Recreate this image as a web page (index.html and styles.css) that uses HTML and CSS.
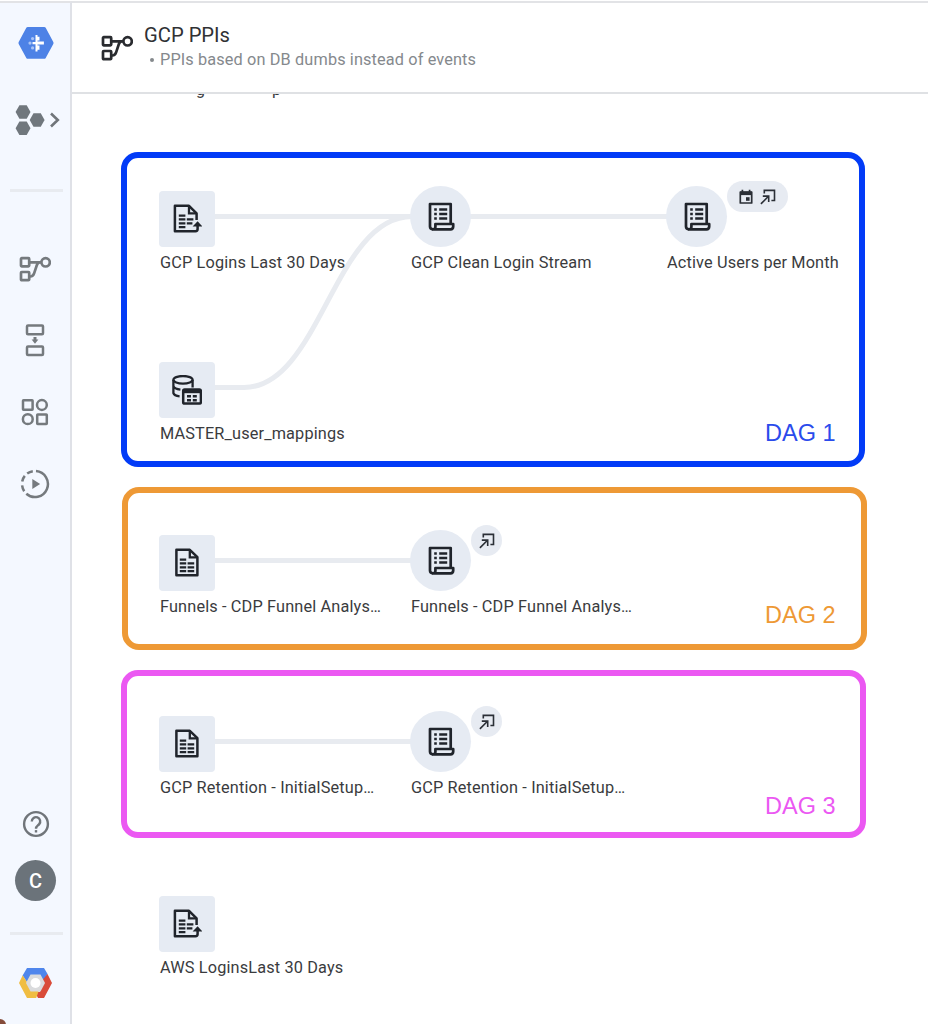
FILE: index.html
```html
<!DOCTYPE html>
<html lang="en">
<head>
<meta charset="utf-8">
<title>GCP PPIs</title>
<link rel="stylesheet" href="styles.css">
</head>
<body>
<svg class="defs" width="0" height="0" aria-hidden="true">
  <symbol id="flow" viewBox="0 0 32 26">
    <g fill="none" stroke="currentColor" stroke-width="2.7">
      <rect x="2" y="2.2" width="8.2" height="8.2" rx=".8"/>
      <rect x="2" y="16" width="8.2" height="8.2" rx=".8"/>
      <circle cx="26.6" cy="6.3" r="4.2"/>
      <path d="M10 6.3h12.4M10 20.5h1.4c2.2 0 3-1 3.8-3.4l2.6-7.8c.6-1.8 1.4-3 3-3"/>
    </g>
  </symbol>
  <symbol id="doc" viewBox="0 0 30 30">
    <path d="M4.4 2.2h13.4l7.6 7.4v18h-21z" transform="translate(0 -.4)" fill="none" stroke="currentColor" stroke-width="2.5" stroke-linejoin="round"/>
    <path d="M17.8 1.8v7.6h7.6" fill="none" stroke="currentColor" stroke-width="2.3"/>
    <path d="M7.8 11.6h6.4M7.8 15.4h6.4M7.8 19.4h6.4M7.8 23.2h6.4M15.6 15.4h6.6M15.6 19.4h6.6M15.6 23.2h6.6" stroke="currentColor" stroke-width="2.3"/>
  </symbol>
  <symbol id="docup" viewBox="0 0 30 30">
    <path d="M24.6 16V9.4L17 1.8H2.9v25.4h20.6q2.1 0 2.1-2.2v-3.400" fill="none" stroke="currentColor" stroke-width="2.5" stroke-linejoin="round"/>
    <path d="M17 1.8v7.6h7.6" fill="none" stroke="currentColor" stroke-width="2.3"/>
    <path d="M6.8 11.6h6.600M6.8 15.4h6.600M6.8 19.4h6.600M6.8 23.2h6.600M14.8 15.4h6.600M14.8 19.4h5.6" stroke="currentColor" stroke-width="2.3"/>
    <path d="M20.6 22.6l5-5.4 5 5.400z" fill="currentColor"/>
  </symbol>
  <symbol id="scroll" viewBox="0 0 28 30">
    <g fill="none" stroke="currentColor" stroke-width="2.7" stroke-linejoin="round">
      <path d="M23.7 21.6V2H3v22.600q0 2.700 3 2.700"/>
      <path d="M8.4 22h17.8v2.500q0 2.800-2.700 2.800H6q2.400 0 2.400-2.600z"/>
    </g>
    <path d="M7.2 7.500h2.600M7.200 12h2.600M7.200 16.500h2.600M12.200 7.500h8M12.200 12h8M12.200 16.500h8" stroke="currentColor" stroke-width="2.5"/>
  </symbol>
  <symbol id="dbtable" viewBox="0 0 30 30">
    <g fill="none" stroke="currentColor" stroke-width="2.300">
      <ellipse cx="11" cy="4.800" rx="9.600" ry="3.800"/>
      <path d="M1.400 5v13.200q.8 2.600 6.200 3.200M1.400 11.200q1 2.800 7 3.500M20.600 5v7.600"/>
    </g>
    <rect x="11.200" y="14.600" width="17.700" height="14" rx="1.400" fill="none" stroke="currentColor" stroke-width="2.500"/>
    <path d="M11.200 14.200h17.700v4H11.200z" fill="currentColor"/>
    <path d="M15 21.200h4M20.800 21.200h4M15 25.300h4M20.800 25.300h4" stroke="currentColor" stroke-width="2.400"/>
  </symbol>
  <symbol id="export" viewBox="0 0 16 16">
    <path d="M4.300 4.400V1.400h10.200v10.100h-3.100M.9 14.900L8.500 7.300M2.800 7.100h5.900V13" fill="none" stroke="currentColor" stroke-width="1.600"/>
  </symbol>
  <symbol id="calendar" viewBox="0 0 14 16">
    <path d="M1.300 3h11.400v11H1.300z" fill="none" stroke="currentColor" stroke-width="1.700" stroke-linejoin="round"/>
    <path d="M1.200 2.600h11.600v3.500H1.200z" fill="currentColor"/>
    <path d="M3.400.7v3M10.600.7v3" stroke="currentColor" stroke-width="1.700"/>
    <path d="M7 8.200h3.600v3.600H7z" fill="currentColor"/>
  </symbol>
</svg>

<div class="app">
  <nav class="sidebar">
    <svg class="product" width="36" height="34" viewBox="0 0 36 34">
      <path d="M9.800 1h16.400q1 0 1.500.8l7.600 14.100q.5 1 0 2l-7.600 14q-.5.9-1.500.9H9.800q-1 0-1.500-.9L.7 17.900q-.5-1 0-2L8.300 1.800q.5-.8 1.500-.8z" fill="#4d82e6"/>
      <path d="M17.500 9h2v16.400h-2zM19.500 10.700h2v3.800h-2zM19.500 19.500h2v4.200h-2zM19.500 15.600h6.400v3h-6.400zM14.500 15.900h3.500v2.400h-3.500z" fill="#fff"/>
      <g fill="#a9c4f6"><circle cx="14.600" cy="12.600" r="1.600"/><circle cx="12" cy="17.100" r="1.600"/><circle cx="14.600" cy="21.900" r="1.600"/></g>
    </svg>
    <svg class="switcher" width="46" height="32" viewBox="0 0 46 32">
      <g fill="#70777d">
        <path d="M4.400 1.200h7.300L15.500 8l-3.800 6.800H4.400L.6 8z"/>
        <path d="M18.500 9.200h7.300l3.800 6.800-3.800 6.800h-7.300L14.700 16z"/>
        <path d="M4.400 17.400h7.300l3.800 6.800-3.800 6.800H4.400L.6 24.200z"/>
      </g>
      <path d="M36 9.500l6.800 6.500-6.800 6.500" fill="none" stroke="#70757a" stroke-width="2.600"/>
    </svg>
    <hr class="rule">
    <div class="menu">
      <svg width="32" height="26"><use href="#flow"/></svg>
      <svg width="20" height="34" viewBox="0 0 20 34" fill="none" stroke="currentColor" stroke-width="2.500">
        <rect x="2" y="2.600" width="16" height="8.600" rx="1"/><rect x="2" y="23.400" width="16" height="8.600" rx="1"/>
        <path d="M10 14v3.500" stroke-width="3"/><path d="M6.600 16.600h6.800L10 20.800z" fill="currentColor" stroke="none"/>
      </svg>
      <svg width="28" height="28" viewBox="0 0 28 28" fill="none" stroke="currentColor" stroke-width="2.500">
        <rect x="2" y="2.200" width="9.600" height="9.600" rx=".5"/><circle cx="20.900" cy="7" r="4.900"/>
        <circle cx="6.800" cy="21.200" r="4.900"/><rect x="16.200" y="16.400" width="9.600" height="9.600" rx=".5"/>
      </svg>
      <svg width="30" height="30" viewBox="0 0 30 30" fill="none" stroke="currentColor" stroke-width="2.500">
        <path d="M16 2.100A13 13 0 1 1 6.300 24.800M12.800 2.200A13 13 0 0 0 7.200 4.600M4.800 6.900A13 13 0 0 0 2.200 12.400M2.100 16.400A13 13 0 0 0 4.200 22.200"/>
        <path d="M12.300 10v10l7.800-5z" fill="currentColor" stroke="none"/>
      </svg>
    </div>
    <svg class="help" width="28" height="28" viewBox="0 0 28 28" fill="none" stroke="#70757a" stroke-width="2.400">
      <circle cx="14" cy="14" r="11.900"/>
      <path d="M9.800 11.400a4.200 4.200 0 1 1 7.400 2.700c-1.500 1.700-3.200 2-3.200 4.600"/><path d="M14 20.100v2.400"/>
    </svg>
    <div class="avatar">C</div>
    <hr class="rule">
    <svg class="cloud" width="34" height="32" viewBox="0 0 34 32">
      <path d="M9 1h17l3.600 6.100L25 15 21.500 9h-9L9 15 4.600 8.500z" fill="#4f86ec"/>
      <path d="M29.500 7L34 16l-8 15h-6l-3-6h4.500L26 16l-1.500-3z" fill="#d94b39"/>
      <path d="M4.700 8.300L9.500 16l4 8h7.200l-2.500 7H9L1 16z" fill="#f0bd42"/>
      <path d="M12.500 7.500h10L27 16l-4.500 8.500h-10L8 16z" fill="#dadbdd"/>
      <circle cx="17.500" cy="16" r="5" fill="#fff"/>
    </svg>
    <span class="corner"></span>
  </nav>

  <div class="page">
    <header class="header">
      <svg class="header-icon" width="32" height="26"><use href="#flow"/></svg>
      <div>
        <h1 class="title">GCP PPIs</h1>
        <p class="subtitle"><span class="bullet"></span><span>PPIs based on DB dumbs instead of events</span></p>
      </div>
    </header>

    <main class="canvas">
      <div class="scrolled"><span>g</span><span>p</span></div>
      <svg class="edges" width="856" height="930" fill="none" stroke="#e8ebf0" stroke-width="5">
        <path d="M143 122.500H340M398 122.500H596M143 293.500H172C248 293.500 262 122.500 340 122.500M143 466.500H340M143 647.500H340"/>
      </svg>

      <section class="dag dag-1"><span>DAG 1</span></section>
      <section class="dag dag-2"><span>DAG 2</span></section>
      <section class="dag dag-3"><span>DAG 3</span></section>

      <div class="node source n1"><i class="shape"><svg width="30" height="30"><use href="#docup"/></svg></i><b>GCP Logins Last 30 Days</b></div>
      <div class="node source n2"><i class="shape"><svg width="30" height="30"><use href="#dbtable"/></svg></i><b>MASTER_user_mappings</b></div>
      <div class="node stream n3"><i class="shape"><svg width="28" height="30"><use href="#scroll"/></svg></i><b>GCP Clean Login Stream</b></div>
      <div class="node stream n4"><i class="shape"><svg width="28" height="30"><use href="#scroll"/></svg></i><b>Active Users per Month</b>
        <span class="badge wide"><svg width="14" height="16"><use href="#calendar"/></svg><svg width="16" height="16"><use href="#export"/></svg></span></div>
      <div class="node source n5"><i class="shape"><svg width="30" height="30"><use href="#doc"/></svg></i><b>Funnels - CDP Funnel Analys…</b></div>
      <div class="node stream n6"><i class="shape"><svg width="28" height="30"><use href="#scroll"/></svg></i><b>Funnels - CDP Funnel Analys…</b>
        <span class="badge"><svg width="16" height="16"><use href="#export"/></svg></span></div>
      <div class="node source n7"><i class="shape"><svg width="30" height="30"><use href="#doc"/></svg></i><b>GCP Retention - InitialSetup…</b></div>
      <div class="node stream n8"><i class="shape"><svg width="28" height="30"><use href="#scroll"/></svg></i><b>GCP Retention - InitialSetup…</b>
        <span class="badge"><svg width="16" height="16"><use href="#export"/></svg></span></div>
      <div class="node source n9"><i class="shape"><svg width="30" height="30"><use href="#docup"/></svg></i><b>AWS LoginsLast 30 Days</b></div>
    </main>
  </div>
</div>
</body>
</html>
```
FILE: styles.css
```css
* { box-sizing: border-box; }
body { margin: 0; background: #fff; font-family: Roboto, "Liberation Sans", sans-serif; color: #3a3b3e; }
.defs { position: absolute; }
svg { display: block; flex: none; }
.app { display: flex; height: 1024px; padding-top: 1px; overflow: hidden; }

.sidebar { position: relative; width: 72px; flex: none; display: flex; flex-direction: column; align-items: center; background: #f4f8ff; border-right: 2px solid #dfe1e7; border-top: 2px solid #e2e3e6; color: #757a7e; padding-top: 23px; overflow: hidden; }
.product { margin-left: 2px; }
.switcher { margin: 44px 0 0 5px; }
.rule { width: 53px; height: 3px; margin: 53px 0 0 2px; border: 0; background: #e8ebf0; flex: none; }
.menu { display: flex; flex-direction: column; align-items: center; margin-top: 64px; }
.menu svg:nth-child(2) { margin-top: 41px; }
.menu svg:nth-child(3) { margin-top: 41px; }
.menu svg:nth-child(4) { margin-top: 43px; }
.help { margin: auto 0 0 1px; }
.avatar { width: 41px; height: 41px; margin: 22px 0 0 1px; border-radius: 50%; background: #6b737a; color: #fff; display: flex; align-items: center; justify-content: center; font-size: 20px; font-weight: 500; flex: none; }
.avatar + .rule { margin-top: 31px; }
.cloud { margin: 32px 0 25px 0; }
.corner { position: absolute; left: -6px; bottom: -7px; width: 12px; height: 12px; border-radius: 50%; background: #854c3a; }

.page { flex: 1; display: flex; flex-direction: column; }
.header { height: 93px; flex: none; display: flex; border-top: 2px solid #e2e3e6; border-bottom: 2px solid #dfe1e4; padding: 20px 0 0 29px; }
.header-icon { margin: 12px 11px 0 0; color: #292b2f; }
.title { margin: 0; font-size: 20.200px; line-height: 25px; font-weight: 400; color: #303134; }
.subtitle { margin: 0; display: flex; align-items: center; font-size: 16.300px; line-height: 24px; letter-spacing: .13px; color: #85898d; }
.bullet { width: 4px; height: 4px; margin: 0 6px 0 6px; border-radius: 50%; background: #85898d; }

.canvas { position: relative; flex: 1; overflow: hidden; }
.scrolled { position: absolute; left: 124px; top: -14px; display: flex; gap: 67px; font-size: 16px; line-height: 19px; }
.edges { position: absolute; left: 0; top: 0; }
.dag { position: absolute; border: 6px solid; border-radius: 17px; display: flex; align-items: flex-end; justify-content: flex-start; padding-left: 638px; font: 23.500px/28px "Liberation Sans", Arial, sans-serif; }
.dag-1 { left: 49px; top: 58px; width: 744px; height: 315px; border-color: #023bf7; color: #2a4bec; padding-bottom: 14px; }
.dag-2 { left: 50px; top: 393px; width: 745px; height: 163px; border-color: #ee9935; color: #ee9935; padding: 0 0 15px 637px; }
.dag-3 { left: 49px; top: 576px; width: 745px; height: 168px; border-color: #eb58f2; color: #eb58f2; padding-bottom: 12px; }

.node { position: absolute; display: flex; flex-direction: column; align-items: flex-start; }
.shape { display: flex; align-items: center; justify-content: center; background: #e6ebf3; color: #20242b; }
.source .shape { width: 56px; height: 56px; border-radius: 4px; }
.stream .shape { width: 61px; height: 61px; border-radius: 50%; }
.node b { font-size: 16.300px; line-height: 20px; font-weight: 400; letter-spacing: .15px; white-space: nowrap; margin: 6px 0 0 1px; }
.badge { position: absolute; left: 61px; top: -5px; width: 31px; height: 31px; border-radius: 16px; display: flex; align-items: center; justify-content: center; background: #e7ebf2; color: #2b2f36; }
.badge.wide { width: 61px; gap: 7px; }
.n1 { left: 87px; top: 97px; }
.n2 { left: 87px; top: 268px; }
.n3 { left: 338px; top: 92px; }
.n4 { left: 594px; top: 92px; }
.n5 { left: 87px; top: 441px; }
.n6 { left: 338px; top: 436px; }
.n7 { left: 87px; top: 622px; }
.n8 { left: 338px; top: 617px; }
.n9 { left: 87px; top: 802px; }
```
